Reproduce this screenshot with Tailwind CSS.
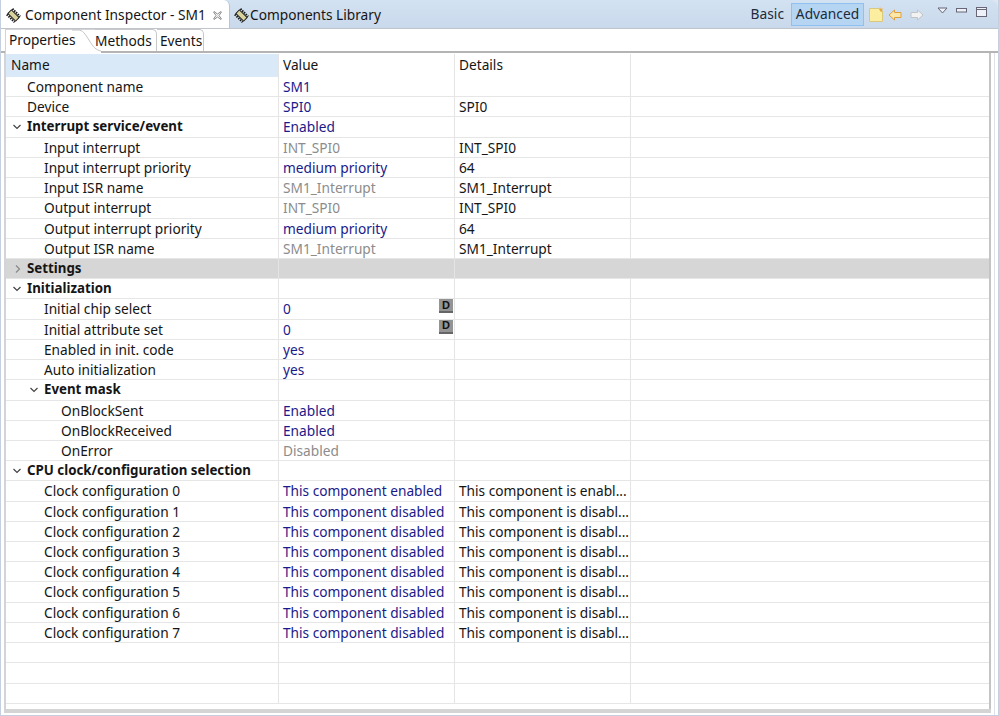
<!DOCTYPE html>
<html><head><meta charset="utf-8"><script src="https://cdn.jsdelivr.net/npm/@tailwindcss/browser@4"></script></head>
<body class="w-[999px] h-[716px] overflow-hidden bg-[#dfe6f2] font-['Noto_Sans','Open_Sans',sans-serif] text-[13.7px] text-[#151515]">
<div class="h-[716px] flex flex-col border-l border-r border-b border-[#c4cfe0]">
<div class="h-[28px] shrink-0 flex items-stretch bg-gradient-to-b from-[#d3e2f2] to-[#c9d9eb] rounded-tr-[8px]">
  <div class="w-[229px] flex items-center pl-[5px] pt-[3px] bg-white rounded-tr-[6px] border-r border-[#b6c4d6] text-[13.75px]">
    <svg width="15" height="15" viewBox="0 0 15 15" class="mr-[4px]"><g transform="rotate(45 7.500 7.500)"><rect x="2" y="5" width="11" height="5" fill="#d8d49c" stroke="#1a1a1a"/><path d="M2 3.500h11M2 11.500h11" stroke="#1a1a1a" stroke-width="2" stroke-dasharray="1.500 1"/></g></svg>
    <span>Component Inspector - SM1</span>
    <svg width="11" height="11" viewBox="0 0 11 11" class="ml-[6px]"><path d="M2 1.500 5.500 4 9 1.500 9.500 2 7 5.500 9.500 9 9 9.500 5.500 7 2 9.500 1.500 9 4 5.500 1.500 2z" fill="#f4f4f4" stroke="#8c8c8c"/></svg>
  </div>
  <div class="flex items-center pl-[4px] pt-[3px] text-[13.7px]">
    <svg width="15" height="15" viewBox="0 0 15 15" class="mr-[1px]"><g transform="rotate(45 7.500 7.500)"><rect x="2" y="5" width="11" height="5" fill="#d8d49c" stroke="#1a1a1a"/><path d="M2 3.500h11M2 11.500h11" stroke="#1a1a1a" stroke-width="2" stroke-dasharray="1.500 1"/></g></svg>
    <span>Components Library</span>
  </div>
  <div class="ml-auto flex items-center pt-[1px] text-[13.75px] text-[#1c2a3a]">
    <span class="mr-[7px]">Basic</span>
    <span class="h-[23px] w-[73px] flex items-center justify-center bg-[#b5d5f3] border border-[#8fc0ef]">Advanced</span>
    <svg width="14" height="15" viewBox="0 0 14 15" class="ml-[5px] mb-[1px]"><path d="M.5 1.500h9.500l3.500 3.500v9.500H.5z" fill="#fbeea0" stroke="#d8c880"/><path d="M11 0l.8 2 2-.8-.8 2 1 1.300-2.200.2-1.500-2z" fill="#e8a838"/></svg>
    <svg width="14" height="12" viewBox="0 0 14 12" class="ml-[5px]"><path d="M6.500 1 1 6l5.500 5V8.500h6.500v-5H6.500z" fill="#fbe8a8" stroke="#dca040"/></svg>
    <svg width="14" height="12" viewBox="0 0 14 12" class="ml-[8px]"><path d="M7.500 1 13 6l-5.500 5V8.500H1v-5h6.500z" fill="#f2f2f2" stroke="#c0c4c8"/></svg>
    <svg width="11" height="7" viewBox="0 0 11 7" class="ml-[13px] mb-[9px]"><path d="M1 1h9L5.500 6z" fill="#eef2f8" stroke="#667"/></svg>
    <svg width="11" height="5" viewBox="0 0 11 5" class="ml-[8px] mb-[9px]"><rect x=".5" y=".5" width="10" height="3.500" fill="#eef2f8" stroke="#667"/></svg>
    <svg width="11" height="10" viewBox="0 0 11 10" class="ml-[9px] mr-[11px] mb-[5px]"><rect x=".5" y=".5" width="10" height="9" fill="#eef2f8" stroke="#667"/><path d="M1 2.500h9" stroke="#667"/></svg>
  </div>
</div>
<div class="flex-1 flex flex-col bg-white border-t border-[#c0c4cc] min-h-0">
  <div class="h-[24px] shrink-0 flex items-end border-b-2 border-[#b4b4b4] pl-[4px] bg-white">
    <div class="relative w-[90px] h-[24px] -mb-[2px] pl-[3px] pb-[2px] flex items-end bg-white border-l border-t border-[#d4d4d4]"><span class="relative z-10">Properties</span>
      <svg width="30" height="24" viewBox="0 0 30 24" class="absolute left-[66px] -top-px"><path d="M0 1H6C11 1 13 5 17 11 21 18 24 21 29 22V24H0z" fill="#fff"/><path d="M0 1H6C11 1 13 5 17 11 21 18 24 21 29 22" fill="none" stroke="#c4c4c4"/></svg>
    </div>
    <div class="w-[62px] h-[22px] pt-[2px] flex items-center border-r border-t border-[#c8c8c8] rounded-tr-[5px]">Methods</div>
    <div class="w-[47px] h-[22px] pl-[3px] pt-[2px] flex items-center border-t border-r border-[#c8c8c8] rounded-tr-[5px]">Events</div>
  </div>
  <div class="flex-1 min-h-0 flex flex-col mr-[3px] border-r border-[#e0e0e8]">
  <div class="flex-1 min-h-0 ml-[3px] mr-[3px] border-l-2 border-l-[#d4d4d8] border-r-2 border-r-[#c4c4c4] overflow-hidden pt-[1px]">
    <div class="grid grid-cols-[272px_176px_176px_1fr] h-[23px] items-center">
      <div class="h-full flex items-center pl-[5px] bg-[#d9e9f7]">Name</div><div class="h-full flex items-center pl-[4px] border-l border-[#e4e4e4]">Value</div><div class="h-full flex items-center pl-[4px] border-l border-[#e4e4e4]">Details</div><div class="h-full border-l border-[#e4e4e4]"></div>
    </div>
    <div class="flex flex-col text-[#151515]">
      <div class="grid grid-cols-[272px_176px_176px_1fr] h-[20.22px] leading-[19px] border-b border-[#e6e6e6]"><div class="pl-[21px]">Component name</div><div class="pl-[4px] border-l border-[#e4e4e4] text-[#1a1a8a]">SM1</div><div class="pl-[4px] border-l border-[#e4e4e4]"></div><div class="border-l border-[#e4e4e4]"></div></div>
      <div class="grid grid-cols-[272px_176px_176px_1fr] h-[20.22px] leading-[19px] border-b border-[#e6e6e6]"><div class="pl-[21px]">Device</div><div class="pl-[4px] border-l border-[#e4e4e4] text-[#1a1a8a]">SPI0</div><div class="pl-[4px] border-l border-[#e4e4e4]">SPI0</div><div class="border-l border-[#e4e4e4]"></div></div>
      <div class="grid grid-cols-[272px_176px_176px_1fr] h-[20.22px] leading-[19px] border-b border-[#e6e6e6]"><div class="pl-[6px] flex items-start gap-[5px] font-bold text-[13.3px]"><svg width="10" height="6" viewBox="0 0 10 6" class="self-center"><path d="M1.500 1 5 4.500 8.500 1" fill="none" stroke="#444" stroke-width="1.200"/></svg>Interrupt service/event</div><div class="pl-[4px] border-l border-[#e4e4e4] text-[#1a1a8a]">Enabled</div><div class="pl-[4px] border-l border-[#e4e4e4]"></div><div class="border-l border-[#e4e4e4]"></div></div>
      <div class="grid grid-cols-[272px_176px_176px_1fr] h-[20.22px] leading-[19px] border-b border-[#e6e6e6]"><div class="pl-[38px]">Input interrupt</div><div class="pl-[4px] border-l border-[#e4e4e4] text-[#8c8c8c]">INT_SPI0</div><div class="pl-[4px] border-l border-[#e4e4e4]">INT_SPI0</div><div class="border-l border-[#e4e4e4]"></div></div>
      <div class="grid grid-cols-[272px_176px_176px_1fr] h-[20.22px] leading-[19px] border-b border-[#e6e6e6]"><div class="pl-[38px]">Input interrupt priority</div><div class="pl-[4px] border-l border-[#e4e4e4] text-[#1a1a8a]">medium priority</div><div class="pl-[4px] border-l border-[#e4e4e4]">64</div><div class="border-l border-[#e4e4e4]"></div></div>
      <div class="grid grid-cols-[272px_176px_176px_1fr] h-[20.22px] leading-[19px] border-b border-[#e6e6e6]"><div class="pl-[38px]">Input ISR name</div><div class="pl-[4px] border-l border-[#e4e4e4] text-[#8c8c8c]">SM1_Interrupt</div><div class="pl-[4px] border-l border-[#e4e4e4]">SM1_Interrupt</div><div class="border-l border-[#e4e4e4]"></div></div>
      <div class="grid grid-cols-[272px_176px_176px_1fr] h-[20.22px] leading-[19px] border-b border-[#e6e6e6]"><div class="pl-[38px]">Output interrupt</div><div class="pl-[4px] border-l border-[#e4e4e4] text-[#8c8c8c]">INT_SPI0</div><div class="pl-[4px] border-l border-[#e4e4e4]">INT_SPI0</div><div class="border-l border-[#e4e4e4]"></div></div>
      <div class="grid grid-cols-[272px_176px_176px_1fr] h-[20.22px] leading-[19px] border-b border-[#e6e6e6]"><div class="pl-[38px]">Output interrupt priority</div><div class="pl-[4px] border-l border-[#e4e4e4] text-[#1a1a8a]">medium priority</div><div class="pl-[4px] border-l border-[#e4e4e4]">64</div><div class="border-l border-[#e4e4e4]"></div></div>
      <div class="grid grid-cols-[272px_176px_176px_1fr] h-[20.22px] leading-[19px] border-b border-[#e6e6e6]"><div class="pl-[38px]">Output ISR name</div><div class="pl-[4px] border-l border-[#e4e4e4] text-[#8c8c8c]">SM1_Interrupt</div><div class="pl-[4px] border-l border-[#e4e4e4]">SM1_Interrupt</div><div class="border-l border-[#e4e4e4]"></div></div>
      <div class="grid grid-cols-[272px_176px_176px_1fr] h-[20.22px] leading-[18px] border-b border-[#e6e6e6] bg-[#d6d6d6]"><div class="pl-[9px] flex items-start gap-[6px] font-bold text-[13.3px]"><svg width="6" height="10" viewBox="0 0 6 10" class="self-center"><path d="M1 1.500 4.500 5 1 8.500" fill="none" stroke="#888" stroke-width="1.200"/></svg>Settings</div><div class="border-l border-[#e4e4e4]"></div><div class="border-l border-[#e4e4e4]"></div><div class="border-l border-[#d6d6d6]"></div></div>
      <div class="grid grid-cols-[272px_176px_176px_1fr] h-[20.22px] leading-[19px] border-b border-[#e6e6e6]"><div class="pl-[6px] flex items-start gap-[5px] font-bold text-[13.3px]"><svg width="10" height="6" viewBox="0 0 10 6" class="self-center"><path d="M1.500 1 5 4.500 8.500 1" fill="none" stroke="#444" stroke-width="1.200"/></svg>Initialization</div><div class="border-l border-[#e4e4e4]"></div><div class="border-l border-[#e4e4e4]"></div><div class="border-l border-[#e4e4e4]"></div></div>
      <div class="grid grid-cols-[272px_176px_176px_1fr] h-[20.22px] leading-[19px] border-b border-[#e6e6e6]"><div class="pl-[38px]">Initial chip select</div><div class="pl-[4px] border-l border-[#e4e4e4] text-[#1a1a8a] flex justify-between">0<span class="w-[14px] h-[14px] mr-[1px] flex items-center justify-center bg-[#949494] border-b-2 border-[#666] text-[11px] font-bold font-['Liberation_Sans'] text-[#111] leading-none">D</span></div><div class="border-l border-[#e4e4e4]"></div><div class="border-l border-[#e4e4e4]"></div></div>
      <div class="grid grid-cols-[272px_176px_176px_1fr] h-[20.22px] leading-[19px] border-b border-[#e6e6e6]"><div class="pl-[38px]">Initial attribute set</div><div class="pl-[4px] border-l border-[#e4e4e4] text-[#1a1a8a] flex justify-between">0<span class="w-[14px] h-[14px] mr-[1px] flex items-center justify-center bg-[#949494] border-b-2 border-[#666] text-[11px] font-bold font-['Liberation_Sans'] text-[#111] leading-none">D</span></div><div class="border-l border-[#e4e4e4]"></div><div class="border-l border-[#e4e4e4]"></div></div>
      <div class="grid grid-cols-[272px_176px_176px_1fr] h-[20.22px] leading-[19px] border-b border-[#e6e6e6]"><div class="pl-[38px]">Enabled in init. code</div><div class="pl-[4px] border-l border-[#e4e4e4] text-[#1a1a8a]">yes</div><div class="border-l border-[#e4e4e4]"></div><div class="border-l border-[#e4e4e4]"></div></div>
      <div class="grid grid-cols-[272px_176px_176px_1fr] h-[20.22px] leading-[19px] border-b border-[#e6e6e6]"><div class="pl-[38px]">Auto initialization</div><div class="pl-[4px] border-l border-[#e4e4e4] text-[#1a1a8a]">yes</div><div class="border-l border-[#e4e4e4]"></div><div class="border-l border-[#e4e4e4]"></div></div>
      <div class="grid grid-cols-[272px_176px_176px_1fr] h-[20.22px] leading-[19px] border-b border-[#e6e6e6]"><div class="pl-[23px] flex items-start gap-[5px] font-bold text-[13.3px]"><svg width="10" height="6" viewBox="0 0 10 6" class="self-center"><path d="M1.500 1 5 4.500 8.500 1" fill="none" stroke="#444" stroke-width="1.200"/></svg>Event mask</div><div class="border-l border-[#e4e4e4]"></div><div class="border-l border-[#e4e4e4]"></div><div class="border-l border-[#e4e4e4]"></div></div>
      <div class="grid grid-cols-[272px_176px_176px_1fr] h-[20.22px] leading-[19px] border-b border-[#e6e6e6]"><div class="pl-[55px]">OnBlockSent</div><div class="pl-[4px] border-l border-[#e4e4e4] text-[#1a1a8a]">Enabled</div><div class="border-l border-[#e4e4e4]"></div><div class="border-l border-[#e4e4e4]"></div></div>
      <div class="grid grid-cols-[272px_176px_176px_1fr] h-[20.22px] leading-[19px] border-b border-[#e6e6e6]"><div class="pl-[55px]">OnBlockReceived</div><div class="pl-[4px] border-l border-[#e4e4e4] text-[#1a1a8a]">Enabled</div><div class="border-l border-[#e4e4e4]"></div><div class="border-l border-[#e4e4e4]"></div></div>
      <div class="grid grid-cols-[272px_176px_176px_1fr] h-[20.22px] leading-[19px] border-b border-[#e6e6e6]"><div class="pl-[55px]">OnError</div><div class="pl-[4px] border-l border-[#e4e4e4] text-[#8c8c8c]">Disabled</div><div class="border-l border-[#e4e4e4]"></div><div class="border-l border-[#e4e4e4]"></div></div>
      <div class="grid grid-cols-[272px_176px_176px_1fr] h-[20.22px] leading-[19px] border-b border-[#e6e6e6]"><div class="pl-[6px] flex items-start gap-[5px] font-bold text-[13.3px]"><svg width="10" height="6" viewBox="0 0 10 6" class="self-center"><path d="M1.500 1 5 4.500 8.500 1" fill="none" stroke="#444" stroke-width="1.200"/></svg>CPU clock/configuration selection</div><div class="border-l border-[#e4e4e4]"></div><div class="border-l border-[#e4e4e4]"></div><div class="border-l border-[#e4e4e4]"></div></div>
      <div class="grid grid-cols-[272px_176px_176px_1fr] h-[20.22px] leading-[19px] border-b border-[#e6e6e6]"><div class="pl-[38px]">Clock configuration 0</div><div class="pl-[4px] border-l border-[#e4e4e4] text-[#1a1a8a]">This component enabled</div><div class="pl-[4px] border-l border-[#e4e4e4] overflow-hidden whitespace-nowrap">This component is enabl...</div><div class="border-l border-[#e4e4e4]"></div></div>
      <div class="grid grid-cols-[272px_176px_176px_1fr] h-[20.22px] leading-[19px] border-b border-[#e6e6e6]"><div class="pl-[38px]">Clock configuration 1</div><div class="pl-[4px] border-l border-[#e4e4e4] text-[#1a1a8a]">This component disabled</div><div class="pl-[4px] border-l border-[#e4e4e4] overflow-hidden whitespace-nowrap">This component is disabl...</div><div class="border-l border-[#e4e4e4]"></div></div>
      <div class="grid grid-cols-[272px_176px_176px_1fr] h-[20.22px] leading-[19px] border-b border-[#e6e6e6]"><div class="pl-[38px]">Clock configuration 2</div><div class="pl-[4px] border-l border-[#e4e4e4] text-[#1a1a8a]">This component disabled</div><div class="pl-[4px] border-l border-[#e4e4e4] overflow-hidden whitespace-nowrap">This component is disabl...</div><div class="border-l border-[#e4e4e4]"></div></div>
      <div class="grid grid-cols-[272px_176px_176px_1fr] h-[20.22px] leading-[19px] border-b border-[#e6e6e6]"><div class="pl-[38px]">Clock configuration 3</div><div class="pl-[4px] border-l border-[#e4e4e4] text-[#1a1a8a]">This component disabled</div><div class="pl-[4px] border-l border-[#e4e4e4] overflow-hidden whitespace-nowrap">This component is disabl...</div><div class="border-l border-[#e4e4e4]"></div></div>
      <div class="grid grid-cols-[272px_176px_176px_1fr] h-[20.22px] leading-[19px] border-b border-[#e6e6e6]"><div class="pl-[38px]">Clock configuration 4</div><div class="pl-[4px] border-l border-[#e4e4e4] text-[#1a1a8a]">This component disabled</div><div class="pl-[4px] border-l border-[#e4e4e4] overflow-hidden whitespace-nowrap">This component is disabl...</div><div class="border-l border-[#e4e4e4]"></div></div>
      <div class="grid grid-cols-[272px_176px_176px_1fr] h-[20.22px] leading-[19px] border-b border-[#e6e6e6]"><div class="pl-[38px]">Clock configuration 5</div><div class="pl-[4px] border-l border-[#e4e4e4] text-[#1a1a8a]">This component disabled</div><div class="pl-[4px] border-l border-[#e4e4e4] overflow-hidden whitespace-nowrap">This component is disabl...</div><div class="border-l border-[#e4e4e4]"></div></div>
      <div class="grid grid-cols-[272px_176px_176px_1fr] h-[20.22px] leading-[19px] border-b border-[#e6e6e6]"><div class="pl-[38px]">Clock configuration 6</div><div class="pl-[4px] border-l border-[#e4e4e4] text-[#1a1a8a]">This component disabled</div><div class="pl-[4px] border-l border-[#e4e4e4] overflow-hidden whitespace-nowrap">This component is disabl...</div><div class="border-l border-[#e4e4e4]"></div></div>
      <div class="grid grid-cols-[272px_176px_176px_1fr] h-[20.22px] leading-[19px] border-b border-[#e6e6e6]"><div class="pl-[38px]">Clock configuration 7</div><div class="pl-[4px] border-l border-[#e4e4e4] text-[#1a1a8a]">This component disabled</div><div class="pl-[4px] border-l border-[#e4e4e4] overflow-hidden whitespace-nowrap">This component is disabl...</div><div class="border-l border-[#e4e4e4]"></div></div>
      <div class="grid grid-cols-[272px_176px_176px_1fr] h-[20.22px] border-b border-[#e6e6e6]"><div></div><div class="border-l border-[#e4e4e4]"></div><div class="border-l border-[#e4e4e4]"></div><div class="border-l border-[#e4e4e4]"></div></div>
      <div class="grid grid-cols-[272px_176px_176px_1fr] h-[20.22px] border-b border-[#e6e6e6]"><div></div><div class="border-l border-[#e4e4e4]"></div><div class="border-l border-[#e4e4e4]"></div><div class="border-l border-[#e4e4e4]"></div></div>
      <div class="grid grid-cols-[272px_176px_176px_1fr] h-[20.22px] border-b border-[#e6e6e6]"><div></div><div class="border-l border-[#e4e4e4]"></div><div class="border-l border-[#e4e4e4]"></div><div class="border-l border-[#e4e4e4]"></div></div>
    </div>
  </div>
  <div class="h-[4px] shrink-0 ml-[3px] mr-[3px] border-l-2 border-l-[#d4d4d8] bg-[#d4d4d4] mb-[2px]"></div>
  </div>
</div>
</div>
</body></html>
